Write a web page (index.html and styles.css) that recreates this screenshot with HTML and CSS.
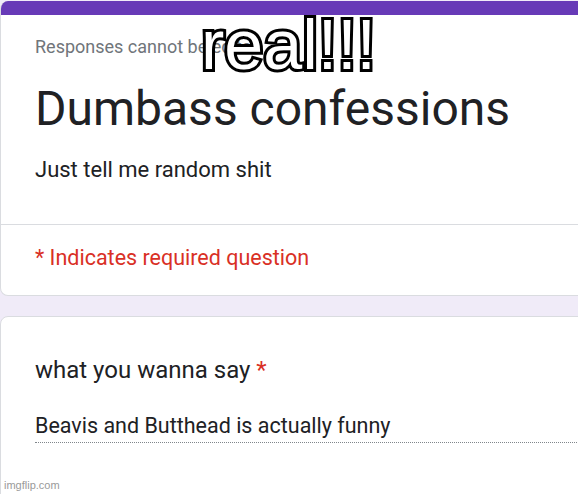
FILE: index.html
```html
<!DOCTYPE html>
<html>
<head>
<meta charset="utf-8">
<link rel="stylesheet" href="styles.css">
</head>
<body>
<div class="page">
  <section class="card header-card">
    <div class="accent"></div>
    <div class="header-body">
      <p class="notice">Responses cannot be edited</p>
      <h1 class="title">Dumbass confessions</h1>
      <p class="desc">Just tell me random shit</p>
    </div>
    <div class="required">* Indicates required question</div>
  </section>
  <section class="card question-card">
    <div class="question">what you wanna say <span class="star">*</span></div>
    <div class="answer">Beavis and Butthead is actually funny</div>
  </section>
</div>
<div class="caption">real!!!</div>
<div class="watermark">imgflip.com</div>
</body>
</html>
```
FILE: styles.css
```css
html, body {
  margin: 0;
  padding: 0;
}
body {
  width: 578px;
  height: 494px;
  overflow: hidden;
  background: #f0ebf8;
  font-family: Roboto, "Liberation Sans", sans-serif;
  position: relative;
}
.page {
  padding-top: 1px;
  display: flex;
  flex-direction: column;
  gap: 20px;
  margin-right: -20px;
}
.card {
  background: #fff;
  border: 1px solid #dadce0;
  border-radius: 8px;
  overflow: hidden;
}
.header-card {
  border-top: none;
}
.accent {
  height: 14px;
  background: #673ab7;
}
.header-body {
  padding: 22px 0 0 34px;
  height: 210px;
  box-sizing: border-box;
  border-bottom: 1px solid #dadce0;
}
.notice {
  margin: 0;
  font-size: 18px;
  color: #70757a;
  line-height: 20px;
}
.title {
  margin: 24px 0 0;
  font-weight: 400;
  font-size: 48px;
  line-height: 56px;
  color: #202124;
}
.desc {
  margin: 19px 0 0;
  font-size: 22px;
  line-height: 28px;
  color: #202124;
}
.required {
  padding: 20px 0 0 34px;
  height: 70px;
  box-sizing: border-box;
  font-size: 21.5px;
  line-height: 26px;
  color: #d93025;
}
.question-card {
  height: 200px;
  padding: 38px 0 0 34px;
  box-sizing: border-box;
}
.question {
  font-size: 24px;
  line-height: 30px;
  color: #202124;
}
.star {
  color: #d93025;
}
.answer {
  margin-top: 28px;
  font-size: 21.5px;
  line-height: 26px;
  color: #202124;
  border-bottom: 1px dotted #80868b;
  padding-bottom: 3px;
}
.caption {
  position: absolute;
  left: 201px;
  top: 5px;
  font-family: "Liberation Sans", Arial, sans-serif;
  font-size: 70px;
  line-height: 80px;
  color: #fff;
  -webkit-text-stroke: 6px #000;
  paint-order: stroke fill;
  text-shadow: 0 0 3px #000, 0 0 3px #000;
}
.watermark {
  position: absolute;
  left: 4px;
  bottom: 3px;
  font-family: "Liberation Sans", Arial, sans-serif;
  font-size: 11px;
  color: #9a9a9a;
}
```
